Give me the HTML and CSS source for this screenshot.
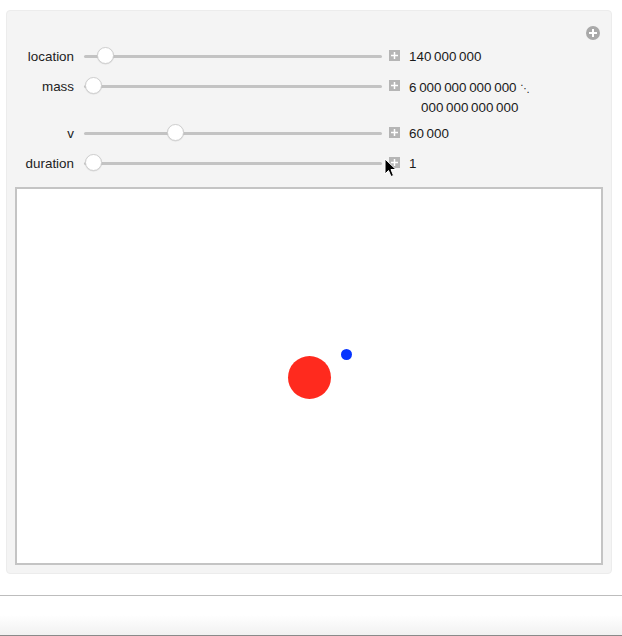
FILE: index.html
```html
<!DOCTYPE html>
<html>
<head>
<meta charset="utf-8">
<link rel="stylesheet" href="styles.css">
</head>
<body>
<div class="page">
  <div class="panel">
    <div class="toolbar">
      <svg class="add-icon" width="14" height="14" viewBox="0 0 14 14">
        <circle cx="7" cy="7" r="7" fill="#a9a9a9"/>
        <rect x="3" y="6" width="8" height="2" fill="#fff"/>
        <rect x="6" y="3" width="2" height="8" fill="#fff"/>
      </svg>
    </div>
    <div class="controls">
      <div class="row">
        <div class="label">location</div>
        <div class="slider"><div class="track"></div><div class="thumb" style="left:13px"></div></div>
        <svg class="step" width="11" height="11" viewBox="0 0 11 11"><rect width="11" height="11" fill="#b5b5b5"/><rect x="2" y="4.75" width="7" height="1.5" fill="#fff"/><rect x="4.75" y="2" width="1.5" height="7" fill="#fff"/></svg>
        <div class="value">140&#8201;000&#8201;000</div>
      </div>
      <div class="row">
        <div class="label">mass</div>
        <div class="slider"><div class="track"></div><div class="thumb" style="left:1px"></div></div>
        <svg class="step" width="11" height="11" viewBox="0 0 11 11"><rect width="11" height="11" fill="#b5b5b5"/><rect x="2" y="4.75" width="7" height="1.5" fill="#fff"/><rect x="4.75" y="2" width="1.5" height="7" fill="#fff"/></svg>
        <div class="value multi">
          <div>6&#8201;000&#8201;000&#8201;000&#8201;000 <span class="cont">⋱</span></div>
          <div class="indent">000&#8201;000&#8201;000&#8201;000</div>
        </div>
      </div>
      <div class="row">
        <div class="label">v</div>
        <div class="slider"><div class="track"></div><div class="thumb" style="left:83px"></div></div>
        <svg class="step" width="11" height="11" viewBox="0 0 11 11"><rect width="11" height="11" fill="#b5b5b5"/><rect x="2" y="4.75" width="7" height="1.5" fill="#fff"/><rect x="4.75" y="2" width="1.5" height="7" fill="#fff"/></svg>
        <div class="value">60&#8201;000</div>
      </div>
      <div class="row">
        <div class="label">duration</div>
        <div class="slider"><div class="track"></div><div class="thumb" style="left:1px"></div></div>
        <svg class="step" width="11" height="11" viewBox="0 0 11 11"><rect width="11" height="11" fill="#b5b5b5"/><rect x="2" y="4.75" width="7" height="1.5" fill="#fff"/><rect x="4.75" y="2" width="1.5" height="7" fill="#fff"/></svg>
        <div class="value">1</div>
      </div>
    </div>
    <div class="plot">
      <svg class="scene" width="584" height="374" viewBox="0 0 584 374">
        <circle cx="292.5" cy="188.5" r="21.5" fill="#ff2a1e"/>
        <circle cx="329.5" cy="165.5" r="5.5" fill="#0634ff"/>
      </svg>
    </div>
  </div>
</div>
<div class="divider"></div>
<div class="footer"></div>
<svg class="cursor" width="14" height="20" viewBox="0 0 14 20">
  <path d="M1 1 L1 16 L4.5 12.5 L7 18.5 L9.5 17.5 L7 11.5 L12 11.5 Z" fill="#000" stroke="#fff" stroke-width="1" stroke-linejoin="round"/>
</svg>
</body>
</html>
```
FILE: styles.css
```css
html, body {
  margin: 0;
  padding: 0;
  background: #fff;
}
body {
  width: 622px;
  height: 636px;
  overflow: hidden;
  position: relative;
  font-family: "Liberation Sans", Arial, sans-serif;
  font-size: 13.4px;
  color: #1a1a1a;
}
.page {
  padding: 10px 10px 0 6px;
}
.panel {
  width: 606px;
  height: 564px;
  box-sizing: border-box;
  background: #f4f4f4;
  border: 1px solid #ececec;
  border-radius: 4px;
  padding: 0 8px 8px 8px;
  display: flex;
  flex-direction: column;
}
.toolbar {
  height: 31px;
  box-sizing: border-box;
  padding-top: 15px;
  display: flex;
  justify-content: flex-end;
}
.add-icon {
  display: block;
  margin-right: 3px;
}
.controls {
  display: flex;
  flex-direction: column;
}
.row {
  display: flex;
  align-items: flex-start;
  min-height: 30px;
}
.label {
  width: 59px;
  text-align: right;
  line-height: 28px;
  padding-top: 2px;
  color: #222;
}
.slider {
  position: relative;
  width: 298px;
  height: 30px;
  margin-left: 10px;
  display: flex;
  align-items: center;
}
.track {
  width: 100%;
  height: 3px;
  background: #c3c3c3;
  border-radius: 1.5px;
}
.thumb {
  position: absolute;
  top: 6px;
  width: 17px;
  height: 17px;
  box-sizing: border-box;
  border-radius: 50%;
  background: #fff;
  border: 1px solid #cfcfcf;
  box-shadow: 0 0.5px 1px rgba(0,0,0,0.12);
}
.step {
  display: block;
  margin-left: 7px;
  margin-top: 9px;
}
.value {
  margin-left: 9px;
  line-height: 28px;
  padding-top: 2px;
  white-space: nowrap;
}
.value.multi {
  line-height: 19px;
  padding-top: 7px;
  padding-bottom: 1px;
}
.indent {
  padding-left: 12px;
}
.cont {
  font-family: "DejaVu Sans", sans-serif;
  font-size: 10px;
}
.plot {
  margin-top: 9px;
  width: 588px;
  height: 378px;
  box-sizing: border-box;
  border: 2px solid #c4c4c4;
  background: #fff;
}
.scene {
  display: block;
}
.divider {
  margin-top: 21px;
  height: 1px;
  background: #bdbdbd;
}
.footer {
  height: 39px;
  background: linear-gradient(to bottom, #fff 0px, #fff 19px, #f1f1f1 39px);
  border-bottom: 1px solid #8a8a8a;
}
.cursor {
  position: absolute;
  left: 384px;
  top: 158px;
}
```
